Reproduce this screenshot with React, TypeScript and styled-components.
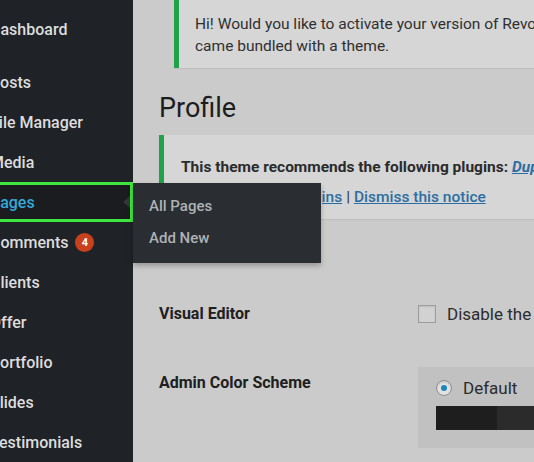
import styled, { createGlobalStyle } from 'styled-components';

const GlobalStyle = createGlobalStyle`
  html, body {
    margin: 0;
    padding: 0;
    background: #cbcbcb;
  }
  body {
    font-family: Roboto, "Noto Sans", "Liberation Sans", sans-serif;
  }
  * {
    box-sizing: border-box;
  }
`;

const Screen = styled.div`
  position: relative;
  display: flex;
  width: 534px;
  height: 462px;
  overflow: hidden;
  background: #cbcbcb;
`;

const Sidebar = styled.nav`
  flex: 0 0 133px;
  background: #1f2226;
  padding-top: 9px;
  display: flex;
  flex-direction: column;
`;

const MenuItem = styled.div<{ $current?: boolean; $gapAfter?: boolean }>`
  position: relative;
  height: 40px;
  display: flex;
  align-items: center;
  gap: 7px;
  margin-bottom: ${({ $gapAfter }) => ($gapAfter ? '13px' : '0')};
  color: ${({ $current }) => ($current ? '#35a8dc' : '#dcdddf')};
  background: ${({ $current }) => ($current ? '#1a1c1f' : 'transparent')};
  border: ${({ $current }) => ($current ? '3px solid #3fe63f' : '0')};
  border-left: 0;
  font-size: 16px;
  font-weight: 500;
  white-space: nowrap;
`;

const MenuLabel = styled.span`
  margin-left: -10px;
`;

const Badge = styled.span`
  display: inline-flex;
  align-items: center;
  justify-content: center;
  width: 19px;
  height: 19px;
  border-radius: 50%;
  background: #c9401c;
  color: #fff;
  font-size: 11px;
  font-weight: 700;
`;

const FlyoutArrow = styled.span`
  position: absolute;
  right: 0;
  top: 50%;
  margin-top: -6px;
  width: 0;
  height: 0;
  border-top: 6px solid transparent;
  border-bottom: 6px solid transparent;
  border-right: 7px solid #33363a;
`;

const Flyout = styled.ul`
  position: absolute;
  left: 133px;
  top: 183px;
  width: 188px;
  margin: 0;
  padding: 7px 0 9px 16px;
  list-style: none;
  background: #2a2d31;
  box-shadow: 0 3px 5px rgba(0, 0, 0, 0.25);
  z-index: 2;
`;

const FlyoutLink = styled.li`
  height: 32px;
  display: flex;
  align-items: center;
  color: #aeb2b6;
  font-size: 15px;
  font-weight: 500;
`;

const Main = styled.main`
  flex: 1;
  min-width: 0;
  padding-left: 26px;
  display: flex;
  flex-direction: column;
  overflow: hidden;
`;

const Notice = styled.div<{ $indent?: number }>`
  margin-left: ${({ $indent }) => $indent ?? 0}px;
  background: #d6d6d6;
  border-left: 5px solid #1fa24a;
  box-shadow: 0 1px 1px rgba(0, 0, 0, 0.06);
  white-space: nowrap;
`;

const TopNotice = styled(Notice)`
  padding: 13px 0 11px 16px;
  color: #303030;
  font-size: 15.5px;
  line-height: 22px;
`;

const PluginNotice = styled(Notice)`
  padding: 22px 0 8px 17px;
  font-size: 15.5px;
  height: 84px;
`;

const NoticeLine = styled.p<{ $strong?: boolean }>`
  margin: 0 0 10px;
  line-height: 20px;
  font-weight: ${({ $strong }) => ($strong ? 700 : 500)};
  color: #2b2b2b;
`;

const NoticeLink = styled.a<{ $italic?: boolean }>`
  color: #2d6ea2;
  text-decoration: underline;
  font-style: ${({ $italic }) => ($italic ? 'italic' : 'normal')};
`;

const Sep = styled.span`
  color: #3a3a3a;
  padding: 0 4px;
`;

const Title = styled.h1`
  margin: 23px 0 10px;
  font-size: 27px;
  line-height: 34px;
  font-weight: 400;
  color: #1d1d1d;
`;

const SettingRow = styled.div<{ $top: number }>`
  display: grid;
  grid-template-columns: 259px 1fr;
  align-items: start;
  margin-top: ${({ $top }) => $top}px;
  white-space: nowrap;
`;

const SettingLabel = styled.div<{ $pad?: number }>`
  padding-top: ${({ $pad }) => $pad ?? 0}px;
  font-size: 16px;
  line-height: 20px;
  font-weight: 700;
  color: #202020;
`;

const CheckField = styled.label`
  display: flex;
  align-items: center;
  gap: 11px;
  height: 20px;
  font-size: 17px;
  color: #2c2c2c;
`;

const Checkbox = styled.span`
  width: 18px;
  height: 18px;
  border: 1px solid #9c9c9c;
  background: #d2d2d2;
  box-shadow: inset 0 1px 2px rgba(0, 0, 0, 0.1);
`;

const SchemeBox = styled.div`
  background: #c1c1c1;
  padding: 13px 0 18px 18px;
`;

const SchemeName = styled.label`
  display: flex;
  align-items: center;
  gap: 11px;
  height: 16px;
  font-size: 17px;
  color: #2c2c2c;
`;

const Radio = styled.span`
  position: relative;
  width: 16px;
  height: 16px;
  border-radius: 50%;
  border: 1px solid #8e8e8e;
  background: #e2e2e2;
  box-shadow: inset 0 1px 2px rgba(0, 0, 0, 0.15);
  &::after {
    content: '';
    position: absolute;
    left: 4px;
    top: 4px;
    width: 6px;
    height: 6px;
    border-radius: 50%;
    background: #1e86b8;
  }
`;

const Swatches = styled.div`
  display: flex;
  margin-top: 10px;
  height: 24px;
`;

const Swatch = styled.span<{ $color: string }>`
  flex: 0 0 61px;
  background: ${({ $color }) => $color};
`;

const menu = [
  'Dashboard',
  'Posts',
  'File Manager',
  'Media',
  'Pages',
  'Comments',
  'Clients',
  'Offer',
  'Portfolio',
  'Slides',
  'Testimonials',
];

export default function App() {
  return (
    <>
      <GlobalStyle />
      <Screen>
        <Sidebar>
          {menu.map((item) => (
            <MenuItem key={item} $current={item === 'Pages'} $gapAfter={item === 'Dashboard'}>
              <MenuLabel>{item}</MenuLabel>
              {item === 'Comments' && <Badge>4</Badge>}
              {item === 'Pages' && <FlyoutArrow />}
            </MenuItem>
          ))}
        </Sidebar>

        <Flyout>
          <FlyoutLink>All Pages</FlyoutLink>
          <FlyoutLink>Add New</FlyoutLink>
        </Flyout>

        <Main>
          <TopNotice $indent={15}>
            Hi! Would you like to activate your version of Revolution Slider to receive live updates? It
            <br />
            came bundled with a theme.
          </TopNotice>

          <Title>Profile</Title>

          <PluginNotice>
            <NoticeLine $strong>
              This theme recommends the following plugins: <NoticeLink $italic>Duplicate Post</NoticeLink>
            </NoticeLine>
            <NoticeLine>
              <NoticeLink>Begin installing plugins</NoticeLink>
              <Sep>|</Sep>
              <NoticeLink>Dismiss this notice</NoticeLink>
            </NoticeLine>
          </PluginNotice>

          <SettingRow $top={85}>
            <SettingLabel>Visual Editor</SettingLabel>
            <CheckField>
              <Checkbox />
              Disable the visual editor when writing
            </CheckField>
          </SettingRow>

          <SettingRow $top={43}>
            <SettingLabel $pad={6}>Admin Color Scheme</SettingLabel>
            <SchemeBox>
              <SchemeName>
                <Radio />
                Default
              </SchemeName>
              <Swatches>
                <Swatch $color="#1e1e1e" />
                <Swatch $color="#2b2b2b" />
                <Swatch $color="#0f6d9e" />
                <Swatch $color="#1e95c8" />
              </Swatches>
            </SchemeBox>
          </SettingRow>
        </Main>
      </Screen>
    </>
  );
}
